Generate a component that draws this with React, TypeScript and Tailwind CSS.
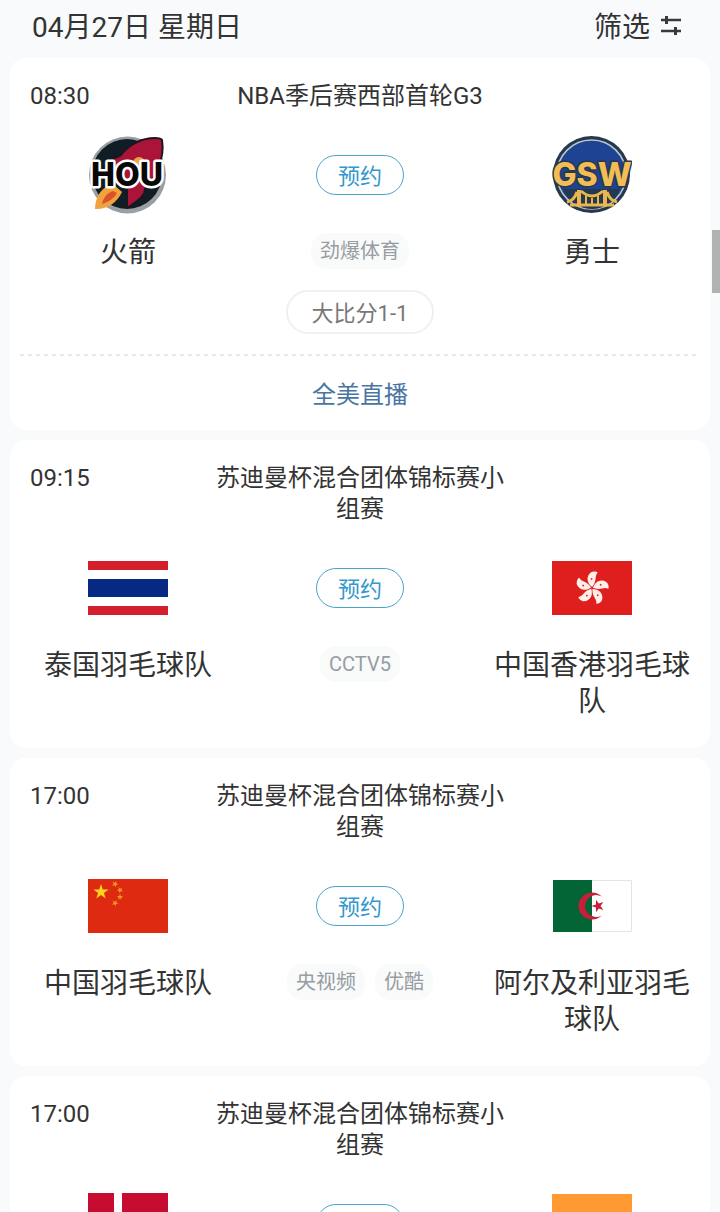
import type { ReactNode } from "react";

type Match = {
  id: number;
  time: string;
  title: string;
  home: { name?: string; logo: ReactNode };
  away: { name?: string; logo: ReactNode };
  channels: string[];
  score?: string;
  link?: string;
};

const STAR =
  "0,-10 2.25,-3.09 9.51,-3.09 3.63,1.18 5.88,8.09 0,3.82 -5.88,8.09 -3.63,1.18 -9.51,-3.09 -2.25,-3.09";

function RocketsLogo() {
  return (
    <svg viewBox="0 0 80 80" className="size-20" role="img" aria-label="HOU">
      <circle cx="39.500" cy="40" r="38.500" fill="#9a9fa2" />
      <circle cx="39" cy="39" r="35" fill="#111d24" />
      <path
        d="M74 5C73 3 70 3 67 3C52 3 40 11 32 21L24 24L16 36L29 37L25 49L39 52L39 71C40 73 43 71 45 69C52 64 57 60 57 54C68 42 77 24 74 5Z"
        fill="#a91438"
        stroke="#1b1720"
        strokeWidth="2"
      />
      <circle cx="51" cy="28" r="6" fill="#e8a24b" />
      <path d="M25 49C14 51 7 62 7 74C18 75 29 68 34 57Z" fill="#f0a33c" />
      <path d="M25 56C18 58 15 64 14 69C20 67 26 64 29 58Z" fill="#d9542b" />
      <text
        x="39"
        y="51"
        textAnchor="middle"
        fill="#080808"
        stroke="#ffffff"
        strokeWidth="5"
        strokeLinejoin="round"
        paintOrder="stroke"
        className="font-[Inter,sans-serif] text-[32px] font-extrabold"
      >
        HOU
      </text>
    </svg>
  );
}

function WarriorsLogo() {
  return (
    <svg viewBox="0 0 80 80" className="size-20" role="img" aria-label="GSW">
      <circle cx="39.500" cy="39.500" r="38.500" fill="#26384c" />
      <circle cx="39.500" cy="39.500" r="34.500" fill="#1e4393" stroke="#b9c6cf" strokeWidth="1.500" />
      <path d="M11 54H68C62 68 52 74 40 74S17 68 11 54Z" fill="#26384c" />
      <g fill="none" stroke="#e9b650" strokeWidth="3">
        <path d="M27 55V72M53 55V72" strokeWidth="4" />
        <path d="M29 56Q40 66 51 56M25 57Q22 66 15 67M55 57Q58 66 65 67" />
        <path d="M18 70H62" />
        <path d="M34 61V70M40 63V70M46 61V70" strokeWidth="2" />
      </g>
      <text
        x="40"
        y="51"
        textAnchor="middle"
        fill="#f2bd55"
        stroke="#26384c"
        strokeWidth="3"
        strokeLinejoin="round"
        paintOrder="stroke"
        className="font-[Inter,sans-serif] text-[32px] font-extrabold"
      >
        GSW
      </text>
    </svg>
  );
}

function ThailandFlag() {
  return (
    <svg viewBox="0 0 80 54" className="w-20" role="img" aria-label="泰国">
      <path d="M0 0H80V54H0Z" fill="#d3202c" />
      <path d="M0 9H80V45H0Z" fill="#ffffff" />
      <path d="M0 18H80V36H0Z" fill="#062a84" />
    </svg>
  );
}

function HongKongFlag() {
  return (
    <svg viewBox="0 0 80 54" className="w-20" role="img" aria-label="中国香港">
      <path d="M0 0H80V54H0Z" fill="#de1f1d" />
      {[10, 82, 154, 226, 298].map((angle) => (
        <g key={angle} transform={`translate(40 27) rotate(${angle})`}>
          <path d="M0 -1C-6 -4 -8 -10 -4 -15C-2 -17 2 -17 3 -16C0 -12 4 -8 0 -1Z" fill="#ffeeea" />
          <circle cx="-2" cy="-9" r="0.900" fill="#de1f1d" />
        </g>
      ))}
    </svg>
  );
}

function ChinaFlag() {
  return (
    <svg viewBox="0 0 80 54" className="w-20" role="img" aria-label="中国">
      <path d="M0 0H80V54H0Z" fill="#de2a10" />
      <polygon points={STAR} fill="#fcd31c" transform="translate(13 13) scale(0.8)" />
      <g fill="#f29a25">
        <polygon points={STAR} transform="translate(27 5) rotate(25) scale(0.34)" />
        <polygon points={STAR} transform="translate(32 11) rotate(45) scale(0.34)" />
        <polygon points={STAR} transform="translate(32 18) scale(0.34)" />
        <polygon points={STAR} transform="translate(27 24) rotate(25) scale(0.34)" />
      </g>
    </svg>
  );
}

function AlgeriaFlag() {
  return (
    <svg viewBox="0 0 80 54" className="w-20" role="img" aria-label="阿尔及利亚">
      <path d="M1.500 1.500H79.500V52.500H1.500Z" fill="#ffffff" stroke="#e4e4e4" />
      <path d="M1 1H40V53H1Z" fill="#036535" />
      <path d="M49.660 17.570A13.500 13.500 0 1 0 49.660 36.430A11 11 0 1 1 49.660 17.570Z" fill="#c51f3a" />
      <polygon points={STAR} fill="#c51f3a" transform="translate(46 27) rotate(-90) scale(0.66)" />
    </svg>
  );
}

function DenmarkFlag() {
  return (
    <svg viewBox="0 0 80 62" className="w-20" role="img" aria-label="丹麦">
      <path d="M0 0H80V62H0Z" fill="#c60c30" />
      <path d="M26 0H34V27H80V35H34V62H26V35H0V27H26Z" fill="#ffffff" />
    </svg>
  );
}

function IndiaFlag() {
  return (
    <svg viewBox="0 0 80 60" className="w-20" role="img" aria-label="印度">
      <path d="M0 0H80V20H0Z" fill="#ff9a32" />
      <path d="M0 20H80V40H0Z" fill="#ffffff" />
      <path d="M0 40H80V60H0Z" fill="#128807" />
      <circle cx="40" cy="30" r="8" fill="none" stroke="#000088" />
    </svg>
  );
}

const matches: Match[] = [
  {
    id: 1,
    time: "08:30",
    title: "NBA季后赛西部首轮G3",
    home: { name: "火箭", logo: <RocketsLogo /> },
    away: { name: "勇士", logo: <WarriorsLogo /> },
    channels: ["劲爆体育"],
    score: "大比分1-1",
    link: "全美直播",
  },
  {
    id: 2,
    time: "09:15",
    title: "苏迪曼杯混合团体锦标赛小组赛",
    home: { name: "泰国羽毛球队", logo: <ThailandFlag /> },
    away: { name: "中国香港羽毛球队", logo: <HongKongFlag /> },
    channels: ["CCTV5"],
  },
  {
    id: 3,
    time: "17:00",
    title: "苏迪曼杯混合团体锦标赛小组赛",
    home: { name: "中国羽毛球队", logo: <ChinaFlag /> },
    away: { name: "阿尔及利亚羽毛球队", logo: <AlgeriaFlag /> },
    channels: ["央视频", "优酷"],
  },
  {
    id: 4,
    time: "17:00",
    title: "苏迪曼杯混合团体锦标赛小组赛",
    home: { logo: <DenmarkFlag /> },
    away: { logo: <IndiaFlag /> },
    channels: [],
  },
];

function Team({ name, logo }: { name?: string; logo: ReactNode }) {
  return (
    <div className="flex flex-col items-center">
      <div className="flex h-20 items-center">{logo}</div>
      {name && <p className="mt-5 text-center text-[28px] leading-9">{name}</p>}
    </div>
  );
}

function MatchCard({ match }: { match: Match }) {
  return (
    <article className="rounded-2xl bg-white">
      <div className="grid grid-cols-[1fr_300px_1fr] px-5 pt-[23px] text-2xl leading-[31px]">
        <time>{match.time}</time>
        <h2 className="text-center">{match.title}</h2>
      </div>

      <div className={`grid grid-cols-[196px_1fr_196px] px-5 pt-[23px] ${match.link ? "pb-5" : "pb-7"}`}>
        <Team {...match.home} />
        <div className="flex flex-col items-center">
          <div className="flex h-20 items-center">
            <button
              type="button"
              className="h-10 w-[88px] rounded-full border border-[#4ba3cb] pt-[3px] text-[22px] leading-8 text-[#3398cb]"
            >
              预约
            </button>
          </div>
          <div className="mt-[18px] flex gap-2.5">
            {match.channels.map((channel) => (
              <span
                key={channel}
                className="rounded-2xl bg-[#f9fafa] px-[9px] text-xl leading-9 text-[#979da3]"
              >
                {channel}
              </span>
            ))}
          </div>
          {match.score && (
            <p className="mt-[21px] rounded-full border-2 border-[#f0f0f0] px-6 pt-[3px] text-[22px] leading-[37px] text-[#777777]">
              {match.score}
            </p>
          )}
        </div>
        <Team {...match.away} />
      </div>

      {match.link && (
        <>
          <div className="mx-2.5 h-0.5 bg-[repeating-linear-gradient(90deg,#e9e9e9_0_4px,transparent_4px_8px)]" />
          <a href="#live" className="block pt-1 text-center text-2xl leading-[70px] text-[#4a74a3]">
            {match.link}
          </a>
        </>
      )}
    </article>
  );
}

function FilterIcon() {
  return (
    <svg viewBox="0 0 22 20" className="mb-1 w-[22px]" fill="none" stroke="#3a3a3a" aria-hidden="true">
      <path d="M1 4H21M1 15H21" strokeWidth="2.500" />
      <path d="M6.500 0V8M15.500 11V19" strokeWidth="3" />
    </svg>
  );
}

export default function App() {
  return (
    <main
      lang="zh-CN"
      className="h-screen overflow-hidden bg-[#f8fafb] font-[Roboto,'Noto_Sans_CJK_SC',sans-serif] text-[#333333]"
    >
      {/* Date and filter */}
      <header className="flex items-center justify-between px-8 pt-2 pb-2.5 text-[28px] leading-10">
        <h1>04月27日 星期日</h1>
        <button type="button" className="mr-1.5 flex items-center gap-2.5">
          筛选
          <FilterIcon />
        </button>
      </header>

      {/* Schedule */}
      <div className="space-y-2.5 px-2.5">
        {matches.map((match) => (
          <MatchCard key={match.id} match={match} />
        ))}
      </div>

      {/* Scroll indicator */}
      <div className="fixed top-[230px] right-0 h-[63px] w-2 bg-[#b0b2b1]" />
    </main>
  );
}
